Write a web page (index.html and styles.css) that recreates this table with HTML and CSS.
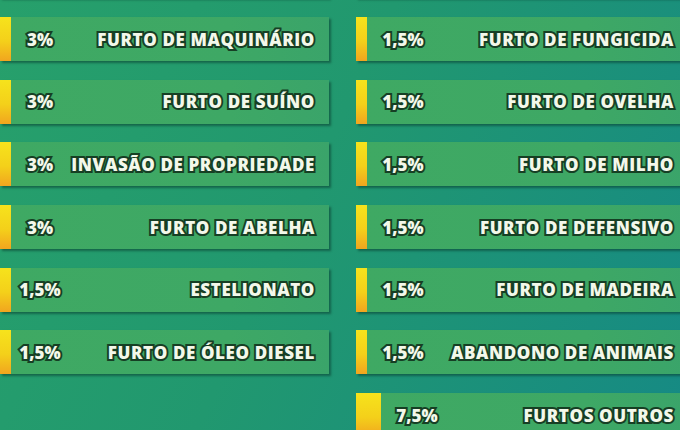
FILE: index.html
```html
<!DOCTYPE html>
<html lang="pt-BR">
<head>
<meta charset="utf-8">
<link rel="stylesheet" href="styles.css">
</head>
<body>
<div class="board">
  <div class="col col-left">
    <div class="row"><span class="stripe"></span></div>
    <div class="row"><span class="stripe"></span><span class="pct">3%</span><span class="label">FURTO DE MAQUINÁRIO</span></div>
    <div class="row"><span class="stripe"></span><span class="pct">3%</span><span class="label">FURTO DE SUÍNO</span></div>
    <div class="row"><span class="stripe"></span><span class="pct">3%</span><span class="label">INVASÃO DE PROPRIEDADE</span></div>
    <div class="row"><span class="stripe"></span><span class="pct">3%</span><span class="label">FURTO DE ABELHA</span></div>
    <div class="row"><span class="stripe"></span><span class="pct">1,5%</span><span class="label">ESTELIONATO</span></div>
    <div class="row"><span class="stripe"></span><span class="pct">1,5%</span><span class="label">FURTO DE ÓLEO DIESEL</span></div>
  </div>
  <div class="col col-right">
    <div class="row"><span class="stripe"></span></div>
    <div class="row"><span class="stripe"></span><span class="pct">1,5%</span><span class="label">FURTO DE FUNGICIDA</span></div>
    <div class="row"><span class="stripe"></span><span class="pct">1,5%</span><span class="label">FURTO DE OVELHA</span></div>
    <div class="row"><span class="stripe"></span><span class="pct">1,5%</span><span class="label">FURTO DE MILHO</span></div>
    <div class="row"><span class="stripe"></span><span class="pct">1,5%</span><span class="label">FURTO DE DEFENSIVO</span></div>
    <div class="row"><span class="stripe"></span><span class="pct">1,5%</span><span class="label">FURTO DE MADEIRA</span></div>
    <div class="row"><span class="stripe"></span><span class="pct">1,5%</span><span class="label">ABANDONO DE ANIMAIS</span></div>
    <div class="row row-total"><span class="stripe"></span><span class="pct">7,5%</span><span class="label">FURTOS OUTROS</span></div>
  </div>
</div>
</body>
</html>
```
FILE: styles.css
```css
html, body {
  margin: 0;
  padding: 0;
}
body {
  width: 680px;
  height: 430px;
  overflow: hidden;
  background: linear-gradient(115deg, #27a06b 0%, #21986f 45%, #168a84 100%);
  font-family: "Open Sans", "DejaVu Sans", sans-serif;
}
.board {
  display: flex;
  gap: 27px;
  margin-top: -45.7px;
}
.col {
  display: flex;
  flex-direction: column;
  gap: 18.7px;
  width: 329px;
  flex: none;
}
.row {
  display: flex;
  align-items: center;
  height: 44px;
  background: linear-gradient(90deg, #3fa963 0%, #3ea865 70%, #3aa46a 100%);
  box-shadow: 2px 2px 2px rgba(10, 60, 45, 0.55);
  color: #f3f8ea;
  font-weight: 800;
  font-size: 17px;
  letter-spacing: 0.6px;
  -webkit-text-stroke: 4px #163f24;
  paint-order: stroke fill;
}
.stripe {
  width: 11px;
  align-self: stretch;
  background: linear-gradient(180deg, #f6e31c 0%, #f4d01a 55%, #f1a51f 100%);
  flex: none;
}
.pct {
  width: 58px;
  text-align: center;
  flex: none;
  letter-spacing: 0;
}
.col-right .pct {
  width: 72px;
}
.label {
  flex: 1;
  text-align: right;
  padding-right: 14px;
}
.col-right .label {
  padding-right: 11px;
}
.row-total .stripe {
  width: 25px;
}
```
